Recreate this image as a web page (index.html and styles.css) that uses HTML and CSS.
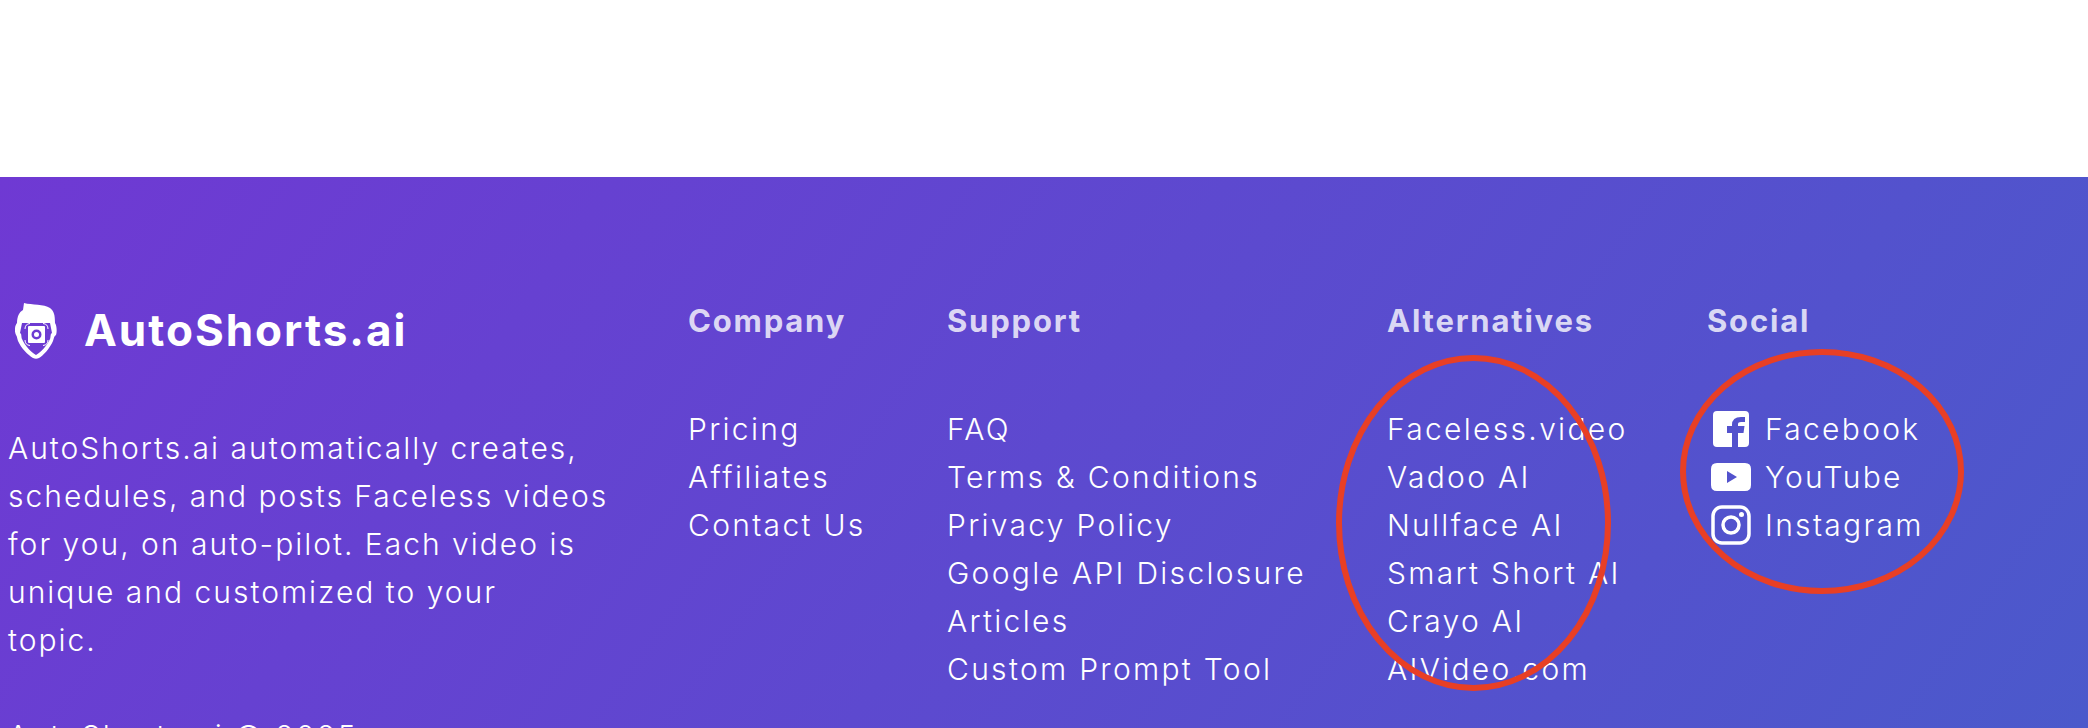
FILE: index.html
```html
<!DOCTYPE html>
<html lang="en">
<head>
<meta charset="utf-8">
<title>AutoShorts.ai</title>
<link rel="stylesheet" href="styles.css">
</head>
<body>
<main class="spacer"></main>
<footer class="footer">
  <section class="brand">
    <div class="logo">
      <svg class="logo-mark" viewBox="0 0 42 56" width="42" height="56" aria-hidden="true">
        <path fill="#fff" fill-rule="evenodd" d="M9 0C17 2 29 1 35 5C39 8 40 12 40 20C42 23 42 29 41 32C39 33 39 35 38 38C35 45 28 53 24 55C22 56 20 56 18 55C13 52 6 45 3 38C2 35 2 33 1 32C-1 28 0 22 2 20C2 14 4 9 8 7ZM7 20L5 30C7 31 6 34 7 36C10 43 16 49 21 52C26 49 32 43 35 36C36 34 35 31 37 30L35 20C27 20 15 20 7 20Z"/>
        <path fill="#fff" fill-rule="evenodd" d="M14 23H29Q30 23 30 24V39Q30 40 29 40H14Q13 40 13 39V24Q13 23 14 23ZM21.500 26.500A5 5 0 1 0 21.500 36.500A5 5 0 1 0 21.500 26.500Z"/>
        <circle cx="21.500" cy="31.500" r="2.500" fill="#fff"/>
        <path fill="none" stroke="#fff" stroke-width="1" d="M10 26Q10 21 15 20.500M28 20.500Q33 21 33 26M10 37Q10 42 15 42.500M28 42.500Q33 42 33 37"/>
      </svg>
      <span class="logo-text">AutoShorts.ai</span>
    </div>
    <p class="blurb">AutoShorts.ai automatically creates,<br>schedules, and posts Faceless videos<br>for you, on auto-pilot. Each video is<br>unique and customized to your<br>topic.</p>
    <p class="copy">AutoShorts.ai © 2025</p>
  </section>
  <nav class="col col-company">
    <h3>Company</h3>
    <ul>
      <li>Pricing</li>
      <li>Affiliates</li>
      <li>Contact Us</li>
    </ul>
  </nav>
  <nav class="col col-support">
    <h3>Support</h3>
    <ul>
      <li>FAQ</li>
      <li>Terms &amp; Conditions</li>
      <li>Privacy Policy</li>
      <li>Google API Disclosure</li>
      <li>Articles</li>
      <li>Custom Prompt Tool</li>
    </ul>
  </nav>
  <nav class="col col-alt">
    <h3>Alternatives</h3>
    <ul>
      <li>Faceless.video</li>
      <li>Vadoo AI</li>
      <li>Nullface AI</li>
      <li>Smart Short AI</li>
      <li>Crayo AI</li>
      <li>AIVideo.com</li>
    </ul>
    <svg class="ring ring-alt" viewBox="0 0 275 336" width="275" height="336" aria-hidden="true"><ellipse cx="137.500" cy="168" rx="134.500" ry="165"/></svg>
  </nav>
  <nav class="col col-social">
    <h3>Social</h3>
    <ul>
      <li class="social">
        <span class="ico"><svg viewBox="0 0 36 36" width="36" height="36" aria-hidden="true"><path fill="#fff" d="M4 0H32Q36 0 36 4V32Q36 36 32 36H25V22H30.500L31.500 15H25V13Q25 11 28 11H32V6H28Q19 6 19 14V15H14V22H19V36H4Q0 36 0 32V4Q0 0 4 0Z"/></svg></span>
        <span>Facebook</span>
      </li>
      <li class="social">
        <span class="ico"><svg viewBox="0 0 40 28" width="40" height="28" aria-hidden="true"><path fill="#fff" fill-rule="evenodd" d="M6 0H34Q40 0 40 6V22Q40 28 34 28H6Q0 28 0 22V6Q0 0 6 0ZM16 8V20L26 14Z"/></svg></span>
        <span>YouTube</span>
      </li>
      <li class="social">
        <span class="ico"><svg viewBox="0 0 40 40" width="40" height="40" aria-hidden="true"><rect x="2" y="2" width="36" height="36" rx="9" fill="none" stroke="#fff" stroke-width="3.500"/><circle cx="20" cy="20" r="8" fill="none" stroke="#fff" stroke-width="3.500"/><circle cx="30.500" cy="9.500" r="2.500" fill="#fff"/></svg></span>
        <span>Instagram</span>
      </li>
    </ul>
    <svg class="ring ring-social" viewBox="0 0 284 245" width="284" height="245" aria-hidden="true"><ellipse cx="142" cy="122.500" rx="139" ry="119.500"/></svg>
  </nav>
</footer>
</body>
</html>
```
FILE: styles.css
```css
* { box-sizing: border-box; }
html, body { margin: 0; height: 728px; overflow: hidden; background: #fff; }
body { font-family: "Inter", "Liberation Sans", sans-serif; color: #fff; }
.spacer { height: 177px; }
.footer {
  display: flex;
  height: 640px;
  padding: 120px 0 0 8px;
  background: linear-gradient(125deg, #6f39d3, #4a5acb);
  font-size: 30px;
  font-weight: 300;
  letter-spacing: 2.3px;
  line-height: 48px;
}
.brand { width: 680px; flex: none; }
.logo { display: flex; align-items: center; gap: 27px; height: 56px; margin: 6px 0 65px; padding-left: 7px; }
.logo-mark { flex: none; }
.logo-text { margin-top: -2px; font-size: 44px; font-weight: 700; letter-spacing: 2px; }
.blurb { margin: 0; letter-spacing: 2px; white-space: nowrap; }
.copy { margin: 48px 0 0; }
.col { position: relative; flex: none; }
.col h3 { margin: 0 0 60px; font-size: 31px; font-weight: 700; letter-spacing: 1.8px; color: rgba(255, 255, 255, .8); line-height: 48px; }
.col ul { margin: 0; padding: 0; list-style: none; }
.col-company { width: 259px; }
.col-support { width: 440px; }
.col-alt { width: 320px; }
.col-social { width: 340px; }
.social { display: flex; align-items: center; gap: 10px; }
.ico { display: flex; width: 48px; height: 48px; align-items: center; justify-content: center; }
.ring { position: absolute; fill: none; stroke: #e83f25; stroke-width: 6; }
.ring-alt { left: -51px; top: 58px; }
.ring-social { left: -27px; top: 52px; }
```
